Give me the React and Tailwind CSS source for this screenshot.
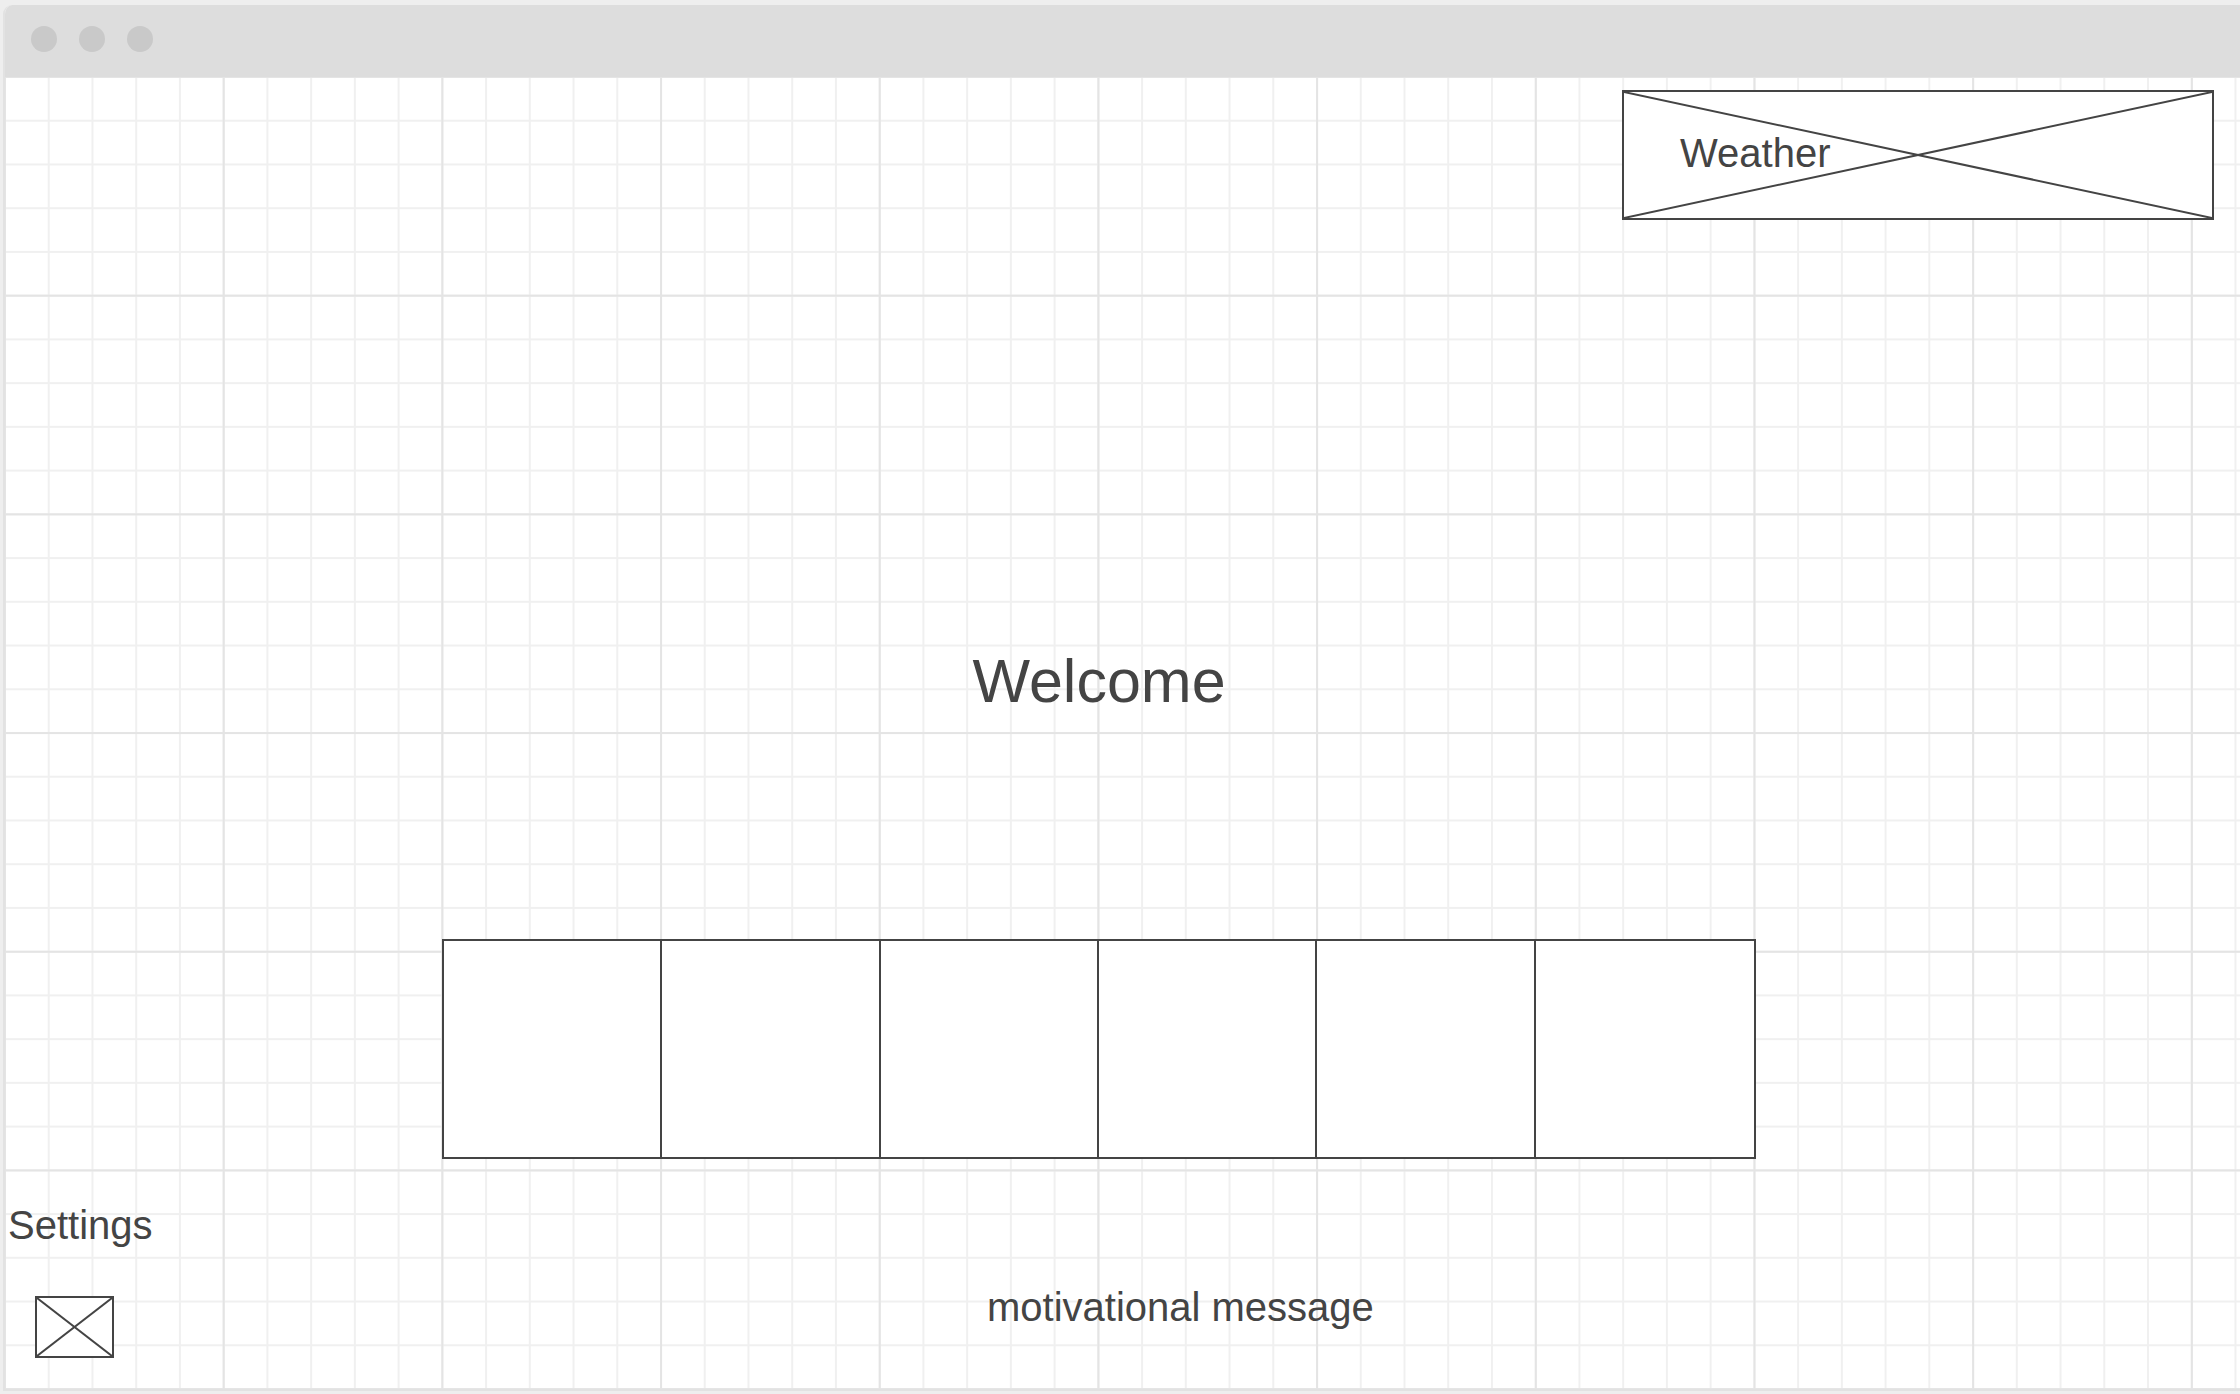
import React from 'react';

// crossed-out placeholder lines, stretched over a relative parent
function Cross() {
  return (
    <svg className="absolute inset-0 w-full h-full" viewBox="0 0 100 100" preserveAspectRatio="none">
      <line x1="0" y1="0" x2="100" y2="100" stroke="#444444" strokeWidth="2" vectorEffect="non-scaling-stroke" />
      <line x1="0" y1="100" x2="100" y2="0" stroke="#444444" strokeWidth="2" vectorEffect="non-scaling-stroke" />
    </svg>
  );
}

export default function App() {
  const cells = [0, 1, 2, 3, 4, 5];

  return (
    <div className="w-[2240px] h-[1394px] overflow-hidden bg-[#eeeeee] pt-[5px] pl-[3px] font-['Liberation_Sans',Arial,sans-serif] text-[#444444]">
      <div className="w-[2240px] h-[1386px] rounded-tl-[9px] overflow-hidden border-l-2 border-b-2 border-[#e2e2e2] bg-white">
        {/* title bar */}
        <div className="h-[72px] bg-[#dddddd] flex items-start pt-[21px] pl-[26px] gap-[22px]">
          <div className="w-[26px] h-[26px] rounded-full bg-[#c9c9c9]" />
          <div className="w-[26px] h-[26px] rounded-full bg-[#c9c9c9]" />
          <div className="w-[26px] h-[26px] rounded-full bg-[#c9c9c9]" />
        </div>

        {/* grid canvas */}
        <div className="h-[1312px] flex flex-col items-start [background-image:linear-gradient(to_right,#e4e4e4_2px,transparent_2px),linear-gradient(to_bottom,#e4e4e4_2px,transparent_2px),linear-gradient(to_right,#f0f0f0_2px,transparent_2px),linear-gradient(to_bottom,#f0f0f0_2px,transparent_2px)] [background-size:218.7px_218.7px,218.7px_218.7px,43.74px_43.74px,43.74px_43.74px] [background-position:-1px_-1px]">
          <div className="relative mt-[13px] ml-[1617px] w-[592px] h-[130px] border-2 border-[#444444] bg-white">
            <Cross />
            <div className="relative pt-[41px] pl-[56px] text-[40px] leading-[40px]">Weather</div>
          </div>

          <div className="mt-[431px] ml-[437px] w-[1314px]">
            <div className="text-center text-[61px] leading-[61px]">Welcome</div>
            <div className="mt-[227px] h-[220px] grid grid-cols-6 border-2 border-[#444444] divide-x-2 divide-[#444444] bg-white">
              {cells.map(i => <div key={i} />)}
            </div>
          </div>

          <div className="mt-[46px] ml-[3px] text-[40px] leading-[40px]">Settings</div>

          <div className="flex items-start">
            <div className="relative mt-[51px] ml-[30px] w-[79px] h-[62px] border-2 border-[#444444] bg-white">
              <Cross />
            </div>
            <div className="mt-[42px] ml-[873px] text-[40px] leading-[40px]">motivational message</div>
          </div>
        </div>
      </div>
    </div>
  );
}
